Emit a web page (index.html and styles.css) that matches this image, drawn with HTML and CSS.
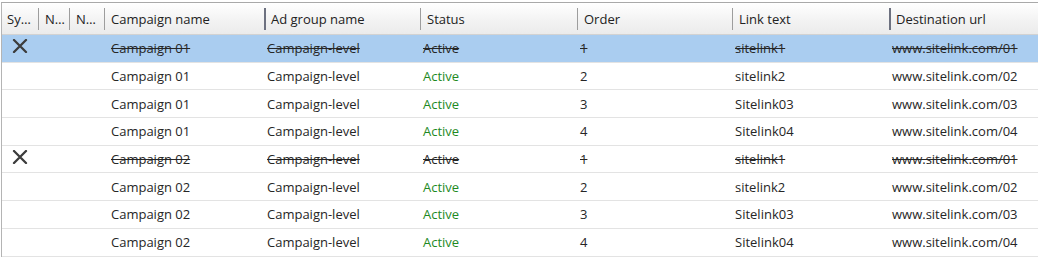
FILE: index.html
```html
<!DOCTYPE html>
<html>
<head>
<meta charset="utf-8">
<link rel="stylesheet" href="styles.css">
</head>
<body>
<div class="grid">
  <div class="row head">
    <div class="hc c1">Sy…</div>
    <div class="hc c2 div">N…</div>
    <div class="hc c3 div">N…</div>
    <div class="hc div">Campaign name</div>
    <div class="hc div dark">Ad group name</div>
    <div class="hc div">Status</div>
    <div class="hc div">Order</div>
    <div class="hc div">Link text</div>
    <div class="hc div dark">Destination url</div>
  </div>

  <div class="row sel del">
    <div class="cell icon"><svg width="16" height="14" viewBox="0 0 16 14"><path d="M2 1 L14 13 M14 1 L2 13" stroke="#3c3c3c" stroke-width="2.3" stroke-linecap="round"/></svg></div>
    <div class="cell"></div><div class="cell"></div>
    <div class="cell camp"><s>Campaign 01</s></div>
    <div class="cell"><s>Campaign-level</s></div>
    <div class="cell"><s>Active</s></div>
    <div class="cell"><s>1</s></div>
    <div class="cell"><s>sitelink1</s></div>
    <div class="cell"><s>www.sitelink.com/01</s></div>
  </div>
  <div class="row">
    <div class="cell"></div><div class="cell"></div><div class="cell"></div>
    <div class="cell camp">Campaign 01</div><div class="cell">Campaign-level</div>
    <div class="cell green">Active</div><div class="cell">2</div>
    <div class="cell">sitelink2</div><div class="cell">www.sitelink.com/02</div>
  </div>
  <div class="row">
    <div class="cell"></div><div class="cell"></div><div class="cell"></div>
    <div class="cell camp">Campaign 01</div><div class="cell">Campaign-level</div>
    <div class="cell green">Active</div><div class="cell">3</div>
    <div class="cell">Sitelink03</div><div class="cell">www.sitelink.com/03</div>
  </div>
  <div class="row">
    <div class="cell"></div><div class="cell"></div><div class="cell"></div>
    <div class="cell camp">Campaign 01</div><div class="cell">Campaign-level</div>
    <div class="cell green">Active</div><div class="cell">4</div>
    <div class="cell">Sitelink04</div><div class="cell">www.sitelink.com/04</div>
  </div>
  <div class="row del">
    <div class="cell icon"><svg width="16" height="14" viewBox="0 0 16 14"><path d="M2 1 L14 13 M14 1 L2 13" stroke="#3c3c3c" stroke-width="2.3" stroke-linecap="round"/></svg></div>
    <div class="cell"></div><div class="cell"></div>
    <div class="cell camp"><s>Campaign 02</s></div>
    <div class="cell"><s>Campaign-level</s></div>
    <div class="cell"><s>Active</s></div>
    <div class="cell"><s>1</s></div>
    <div class="cell"><s>sitelink1</s></div>
    <div class="cell"><s>www.sitelink.com/01</s></div>
  </div>
  <div class="row">
    <div class="cell"></div><div class="cell"></div><div class="cell"></div>
    <div class="cell camp">Campaign 02</div><div class="cell">Campaign-level</div>
    <div class="cell green">Active</div><div class="cell">2</div>
    <div class="cell">sitelink2</div><div class="cell">www.sitelink.com/02</div>
  </div>
  <div class="row">
    <div class="cell"></div><div class="cell"></div><div class="cell"></div>
    <div class="cell camp">Campaign 02</div><div class="cell">Campaign-level</div>
    <div class="cell green">Active</div><div class="cell">3</div>
    <div class="cell">Sitelink03</div><div class="cell">www.sitelink.com/03</div>
  </div>
  <div class="row">
    <div class="cell"></div><div class="cell"></div><div class="cell"></div>
    <div class="cell camp">Campaign 02</div><div class="cell">Campaign-level</div>
    <div class="cell green">Active</div><div class="cell">4</div>
    <div class="cell">Sitelink04</div><div class="cell">www.sitelink.com/04</div>
  </div>
</div>
</body>
</html>
```

FILE: styles.css
```css
html, body {
  margin: 0;
  padding: 0;
  background: #ffffff;
}
body {
  font-family: "Open Sans", "Noto Sans", "Liberation Sans", sans-serif;
  font-size: 13px;
  color: #262626;
}
.grid {
  margin: 2px 0 0 1px;
  border-top: 1px solid #a9a9a9;
  border-left: 1px solid #b4b4b4;
}
.row {
  display: grid;
  grid-template-columns: 36px 31px 35px 160px 156px 157px 155px 157px 1fr;
  height: 26.7px;
  border-bottom: 1px solid #e3e3e3;
  align-items: center;
}
.row.head {
  height: 31px;
  background: linear-gradient(#ffffff, #f3f3f3 55%, #ebebeb);
  border-bottom: 1px solid #d2d2d2;
}
.hc {
  height: 22px;
  display: flex;
  align-items: center;
  padding-left: 5px;
  white-space: nowrap;
  overflow: hidden;
  color: #222;
}
.hc.div {
  border-left: 1px solid #9d9d9d;
  padding-left: 6px;
}
.hc.dark {
  border-left: 2px solid #6d7180;
  padding-left: 5px;
}
.cell {
  padding-left: 3px;
  white-space: nowrap;
  overflow: hidden;
  line-height: 26px;
}
.cell.camp {
  padding-left: 7px;
}
.sel {
  background: #aacdf0;
}
.green {
  color: #1f8a1f;
}
s {
  text-decoration-thickness: 1px;
}
.icon {
  display: flex;
  align-items: center;
  justify-content: flex-start;
  padding-left: 10px;
  padding-bottom: 4px;
}
.icon svg {
  display: block;
}
```
